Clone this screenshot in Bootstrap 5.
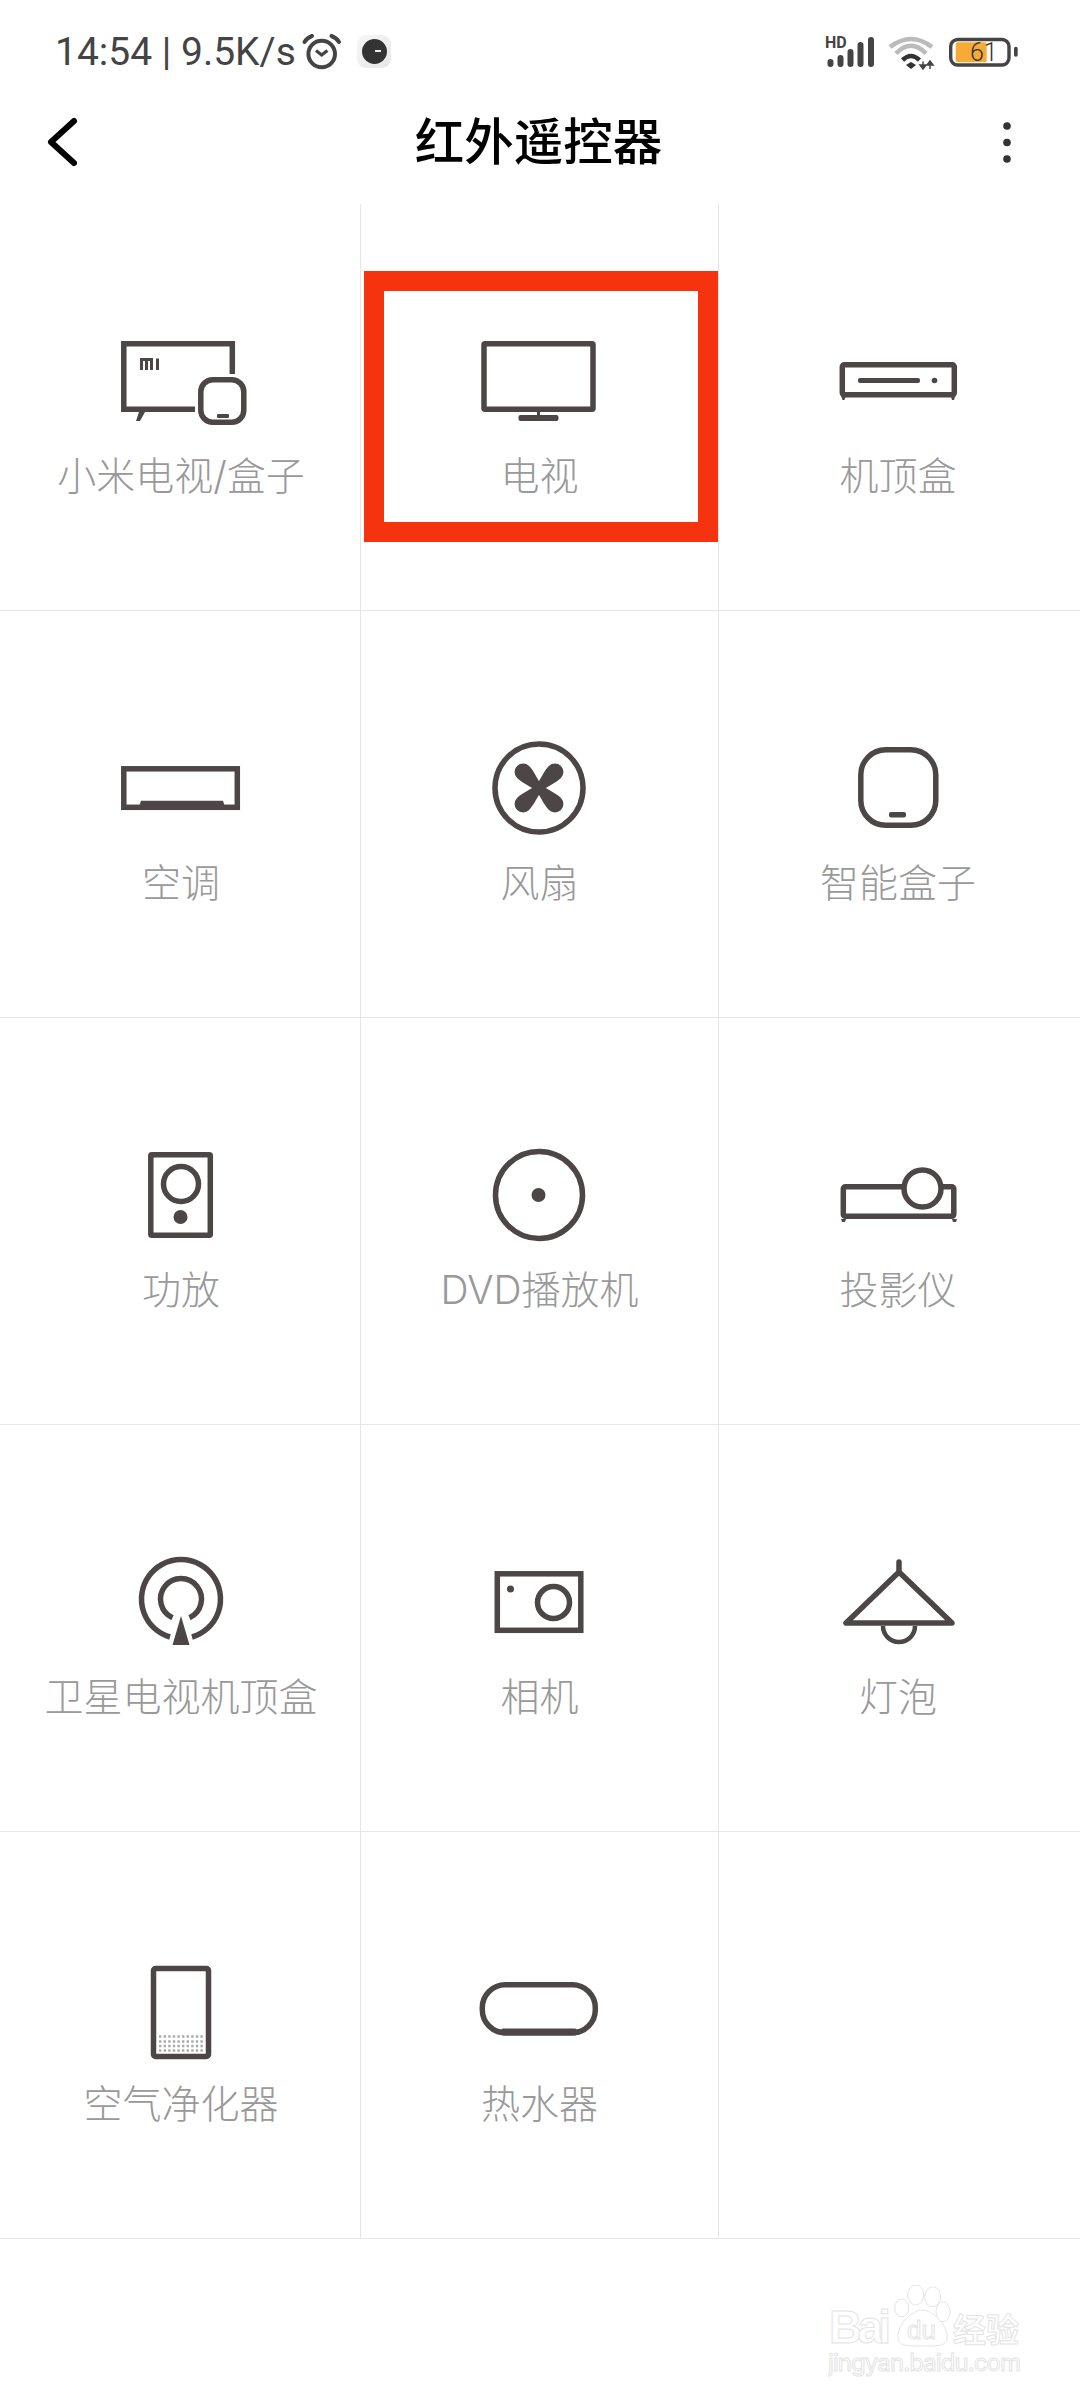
<!DOCTYPE html>
<html lang="zh-CN">
<head>
  <meta charset="UTF-8">
  <title>红外遥控器</title>
  <link href="https://cdn.jsdelivr.net/npm/bootstrap@5.3.0/dist/css/bootstrap.min.css" rel="stylesheet">
  <style>
    body { background: #fff; font-family: "Noto Sans CJK SC", "Noto Sans", sans-serif; }

    .screen { width: 1080px; height: 2400px; overflow: hidden; }

    /* status bar */
    .status-row { height: 86px; padding: 24px 0 0 55px; }
    .status-time { width: 245px; font: 400 39px/56px Roboto, sans-serif; color: #444; white-space: nowrap; }
    .status-alarm { margin-top: 6px; }
    .status-app { width: 34px; height: 33px; margin: 11px 0 0 15px; border-radius: 9px; background: linear-gradient(135deg, #f7f7f7, #e6e6e6); }
    .status-app i { display: block; position: relative; width: 25px; height: 25px; border-radius: 50%; background: #333; }
    .status-app i::after { content: ""; position: absolute; left: 13px; top: 11px; width: 6px; height: 2px; background: #eee; }
    .status-right { margin-left: auto; padding-right: 61px; gap: 12px; padding-top: 9px; }

    /* title bar */
    .title-row { height: 118px; padding: 0 3px 13px 0; }
    .title-back { left: 46px; top: 30px; }
    .title-more { left: 1000px; top: 36px; }
    .title-text { font-size: 49.5px; font-weight: 500; color: #000; line-height: 60px; }

    /* device grid */
    .device-grid { display: grid; grid-template-columns: 361px 358px 361px; grid-auto-rows: 407px; }
    .device-cell { padding-top: 117px; border-bottom: 1px solid #e6e6e6; border-right: 1px solid #e6e6e6; }
    .device-cell:nth-child(3n) { border-right: 0; }
    .device-cell svg { display: block; }
    .device-name { margin-top: 10px; font-family: Inter, "Noto Sans CJK SC", sans-serif; font-size: 39px; font-weight: 300; line-height: 50px; color: #999; white-space: nowrap; }
    .device-cell:nth-child(3n+1) .device-name { margin-left: 2px; }
    .device-cell:nth-child(3n) .device-name { margin-right: 3px; }
    .dev-line { fill: none; stroke: #4c4746; stroke-width: 5.5; }
    .dev-fill { fill: #4c4746; }

    .mark-box { left: 3px; top: 67px; width: 354px; height: 271px; border: 20px solid #f5340f; }

    /* watermark */
    .baidu-mark { right: 56px; top: 2285px; width: 196px; height: 100px; }
    .baidu-mark svg { display: block; }
    .baidu-mark text { fill: #fff; stroke: #e4e4e4; stroke-width: 1; font-family: "Liberation Sans", sans-serif; }
    .baidu-mark .baidu-cn { font-family: "Noto Sans CJK SC", sans-serif; }
    .baidu-mark .baidu-url { font-family: Inter, sans-serif; }
  </style>
</head>
<body>
<div class="screen position-relative">

  <!-- Status bar -->
  <div class="status-row d-flex align-items-start">
    <span class="status-time">14:54 | 9.5K/s</span>
    <svg class="status-alarm" width="42" height="42" viewBox="0 0 42 42">
      <circle cx="21.700" cy="24" r="13.300" fill="none" stroke="#444" stroke-width="4"/>
      <path d="M16 20.500l5.700 4.500 5.700-4.500" fill="none" stroke="#444" stroke-width="3.200"/>
      <path d="M4.500 12C6 9.500 9 7 12 6M39 12C37.500 9.500 34.500 7 31.500 6" fill="none" stroke="#444" stroke-width="4" stroke-linecap="round"/>
    </svg>
    <div class="status-app d-flex align-items-center justify-content-center">
      <i></i>
    </div>
    <div class="status-right d-flex align-items-start">
      <svg width="52" height="36" viewBox="0 0 52 36">
        <text x="2" y="14.700" font-family="Roboto, sans-serif" font-weight="700" font-size="16" fill="#444">HD</text>
        <g stroke="#444" stroke-width="6" stroke-linecap="round">
          <path d="M7.500 29v2M17.500 25v6M27.500 19v12M37.500 12v19M48 7v24"/>
        </g>
      </svg>
      <svg width="48" height="38" viewBox="0 0 48 38">
        <path d="M3 14Q24 -2 45 14" fill="none" stroke="#bbb" stroke-width="4.500"/>
        <path d="M9 20.500Q24 5 39 20.500" fill="none" stroke="#bbb" stroke-width="4.500"/>
        <path d="M15.500 27Q24 19 32.500 27" fill="none" stroke="#333" stroke-width="4.500"/>
        <path d="M19 32l5-3 5 3-5 4z" fill="#333"/>
        <path d="M36 28.500v4M33 32h6l-3 4zM43 36v-4M40 32h6l-3-4z" fill="#444" stroke="#444" stroke-width="1.500"/>
      </svg>
      <svg width="70" height="36" viewBox="0 0 70 36" style="margin-left:2px">
        <rect x="1.700" y="6.500" width="58.300" height="25.500" rx="7" fill="#fff" stroke="#444" stroke-width="3.400"/>
        <rect x="6.700" y="9.300" width="31" height="20" rx="2" fill="#f5ab35"/>
        <rect x="65" y="13.700" width="3.700" height="10" rx="1.800" fill="#444"/>
        <text x="21" y="28" font-family="Roboto, sans-serif" font-weight="300" font-size="25" fill="#333">61</text>
      </svg>
    </div>
  </div>

  <!-- Title bar -->
  <div class="title-row position-relative d-flex align-items-center justify-content-center">
    <svg class="title-back position-absolute" width="34" height="52" viewBox="0 0 34 52">
      <path d="M28 5L5 26l23 21" fill="none" stroke="#000" stroke-width="6" stroke-linecap="round" stroke-linejoin="round"/>
    </svg>
    <span class="title-text">红外遥控器</span>
    <svg class="title-more position-absolute" width="14" height="42" viewBox="0 0 14 42">
      <circle cx="7" cy="4" r="3.800" fill="#333"/>
      <circle cx="7" cy="20.500" r="3.800" fill="#333"/>
      <circle cx="7" cy="37" r="3.800" fill="#333"/>
    </svg>
  </div>

  <!-- Device grid -->
  <div class="device-grid">

    <div class="device-cell d-flex flex-column align-items-center">
      <svg width="140" height="120" viewBox="0 0 140 120">
        <path class="dev-line" d="M122.300 53V22.800H13.800V88.300H85"/>
        <path class="dev-fill" d="M24 91h11l-5 9h-4l3-9z"/>
        <rect class="dev-line" x="90.800" y="58.800" width="43" height="42.500" rx="12"/>
        <rect class="dev-fill" x="107" y="93" width="12" height="4" rx="1"/>
        <path d="M31.500 49V38.500H41.500V49M36.500 39V49M47.500 37.500V49" fill="none" stroke="#4c4746" stroke-width="3"/>
      </svg>
      <div class="device-name">小米电视/盒子</div>
    </div>

    <div class="device-cell d-flex flex-column align-items-center position-relative">
      <svg width="140" height="120" viewBox="0 0 140 120">
        <rect class="dev-line" x="14" y="22.800" width="109" height="65.500" rx="1"/>
        <rect class="dev-fill" x="67" y="90" width="3" height="6"/>
        <rect class="dev-fill" x="48.500" y="94" width="40" height="6" rx="2"/>
      </svg>
      <div class="device-name">电视</div>
      <div class="mark-box position-absolute"></div>
    </div>

    <div class="device-cell d-flex flex-column align-items-center">
      <svg width="140" height="120" viewBox="0 0 140 120">
        <rect class="dev-line" x="12.300" y="43.800" width="112" height="30" rx="2"/>
        <path class="dev-fill" d="M11 74h5l-1.500 5h-2zM120.500 74h5l-1.500 5h-2z"/>
        <rect class="dev-fill" x="28" y="57" width="62" height="5" rx="2"/>
        <circle class="dev-fill" cx="104.500" cy="59.500" r="2.800"/>
      </svg>
      <div class="device-name">机顶盒</div>
    </div>

    <div class="device-cell d-flex flex-column align-items-center">
      <svg width="140" height="120" viewBox="0 0 140 120">
        <rect class="dev-line" x="13.800" y="40.800" width="113.500" height="38.500"/>
        <path class="dev-fill" d="M28 82l3-9.300h82l3 9.300z"/>
      </svg>
      <div class="device-name">空调</div>
    </div>

    <div class="device-cell d-flex flex-column align-items-center">
      <svg width="140" height="120" viewBox="0 0 140 120">
        <circle class="dev-line" cx="69" cy="60" r="44"/>
        <g class="dev-fill" transform="translate(69 60)">
          <path transform="rotate(45)" d="M-4 0C-5-8-8.500-15-8.500-22.500A8.500 8.500 0 0 1 8.500-22.500C8.500-15 5-8 4 0Z"/>
          <path transform="rotate(135)" d="M-4 0C-5-8-8.500-15-8.500-22.500A8.500 8.500 0 0 1 8.500-22.500C8.500-15 5-8 4 0Z"/>
          <path transform="rotate(225)" d="M-4 0C-5-8-8.500-15-8.500-22.500A8.500 8.500 0 0 1 8.500-22.500C8.500-15 5-8 4 0Z"/>
          <path transform="rotate(315)" d="M-4 0C-5-8-8.500-15-8.500-22.500A8.500 8.500 0 0 1 8.500-22.500C8.500-15 5-8 4 0Z"/>
        </g>
      </svg>
      <div class="device-name">风扇</div>
    </div>

    <div class="device-cell d-flex flex-column align-items-center">
      <svg width="140" height="120" viewBox="0 0 140 120">
        <rect class="dev-line" x="30.800" y="21.800" width="75" height="75.500" rx="25"/>
        <rect class="dev-fill" x="59" y="84" width="17" height="5.500" rx="2"/>
      </svg>
      <div class="device-name">智能盒子</div>
    </div>

    <div class="device-cell d-flex flex-column align-items-center">
      <svg width="140" height="120" viewBox="0 0 140 120">
        <rect class="dev-line" x="40.800" y="19.800" width="59.500" height="80.500" rx="1"/>
        <circle class="dev-line" cx="71" cy="49" r="17.500"/>
        <circle class="dev-fill" cx="70.500" cy="82" r="7"/>
      </svg>
      <div class="device-name">功放</div>
    </div>

    <div class="device-cell d-flex flex-column align-items-center">
      <svg width="140" height="120" viewBox="0 0 140 120">
        <circle class="dev-line" cx="69" cy="60" r="43.500"/>
        <circle class="dev-fill" cx="68.500" cy="60" r="7"/>
      </svg>
      <div class="device-name">DVD播放机</div>
    </div>

    <div class="device-cell d-flex flex-column align-items-center">
      <svg width="140" height="120" viewBox="0 0 140 120">
        <rect class="dev-line" x="13.300" y="51.800" width="110.500" height="29.500" rx="2"/>
        <path class="dev-fill" d="M11 84h5l-1 3h-3zM122 84h5l-1 3h-3z"/>
        <circle class="dev-line" cx="92.500" cy="53.500" r="18.500" style="fill:#fff"/>
      </svg>
      <div class="device-name">投影仪</div>
    </div>

    <div class="device-cell d-flex flex-column align-items-center">
      <svg width="140" height="120" viewBox="0 0 140 120">
        <path class="dev-line" d="M60 95A39.500 39.500 0 1 1 82 95"/>
        <path class="dev-line" d="M62.500 75.700A20.500 20.500 0 1 1 79.500 75.700"/>
        <path class="dev-fill" d="M71 74L62.500 103H79.500Z"/>
      </svg>
      <div class="device-name">卫星电视机顶盒</div>
    </div>

    <div class="device-cell d-flex flex-column align-items-center">
      <svg width="140" height="120" viewBox="0 0 140 120">
        <rect class="dev-line" x="27.300" y="31.800" width="83.500" height="56.500"/>
        <circle class="dev-line" cx="83.500" cy="60.500" r="16"/>
        <circle class="dev-fill" cx="40.500" cy="47" r="3.500"/>
      </svg>
      <div class="device-name">相机</div>
    </div>

    <div class="device-cell d-flex flex-column align-items-center">
      <svg width="140" height="120" viewBox="0 0 140 120">
        <path class="dev-line" d="M69 20V30" stroke-linecap="round"/>
        <path class="dev-line" d="M69 30L16 81H122Z" stroke-linejoin="round"/>
        <path d="M53 84a16 16 0 0 0 32 0" fill="none" stroke="#4c4746" stroke-width="4.500"/>
      </svg>
      <div class="device-name">灯泡</div>
    </div>

    <div class="device-cell d-flex flex-column align-items-center">
      <svg width="140" height="120" viewBox="0 0 140 120">
        <rect class="dev-line" x="43.500" y="19.500" width="55" height="88" rx="2"/>
        <g stroke="#aaa" stroke-width="2.400" stroke-dasharray="2.400 2.200" fill="none">
          <path d="M49 87.500H95M49 92.500H95M49 97H95M49 101.500H95"/>
        </g>
      </svg>
      <div class="device-name">空气净化器</div>
    </div>

    <div class="device-cell d-flex flex-column align-items-center">
      <svg width="140" height="120" viewBox="0 0 140 120">
        <rect class="dev-line" x="12.300" y="35.800" width="113" height="48" rx="23"/>
        <rect class="dev-fill" x="31" y="79.500" width="76" height="7" rx="2"/>
      </svg>
      <div class="device-name">热水器</div>
    </div>

    <div class="device-cell"></div>
  </div>

  <!-- Watermark -->
  <div class="baidu-mark position-absolute">
    <svg width="196" height="100" viewBox="0 0 196 100">
      <text x="1" y="58" font-size="46" font-weight="700" textLength="62">Bai</text>
      <path d="M70 52C70 38 85 25 94.500 25C104 25 119 38 119 52C119 62 108 61 94.500 61C81 61 70 62 70 52Z" fill="#fff" stroke="#e4e4e4"/>
      <ellipse cx="73.700" cy="23" rx="7" ry="9" fill="#fff" stroke="#e4e4e4"/>
      <ellipse cx="87.700" cy="10" rx="8" ry="10" fill="#fff" stroke="#e4e4e4"/>
      <ellipse cx="104.700" cy="11.700" rx="8" ry="10" fill="#fff" stroke="#e4e4e4"/>
      <ellipse cx="115" cy="26.700" rx="7" ry="10" fill="#fff" stroke="#e4e4e4"/>
      <text x="79" y="54" font-size="26">du</text>
      <text class="baidu-cn" x="125" y="57" font-size="33" font-weight="700">经验</text>
      <text class="baidu-url" x="0" y="86" font-size="24" textLength="193">jingyan.baidu.com</text>
    </svg>
  </div>

</div>
<script src="https://cdn.jsdelivr.net/npm/bootstrap@5.3.0/dist/js/bootstrap.bundle.min.js"></script>
</body>
</html>
